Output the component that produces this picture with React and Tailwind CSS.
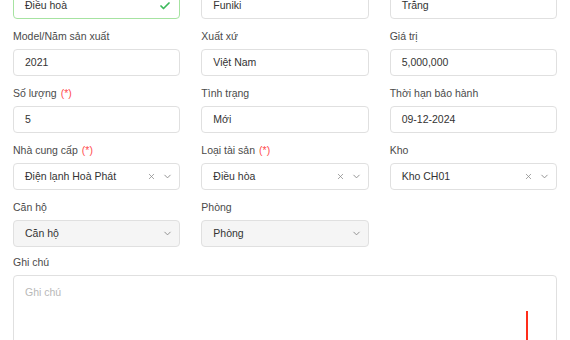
import { Check, ChevronDown, X } from 'lucide-react'

const font = { fontFamily: '"Liberation Sans", Arial, sans-serif' }

function Label({ text, required }) {
  return (
    <div className="h-[14px] text-[10.5px] leading-[14px] text-[#4a4a4a]">
      {text}
      {required && <span className="ml-1 text-[#ff4d4f]">(*)</span>}
    </div>
  )
}

function Input({ value, valid }) {
  return (
    <div
      className={`flex h-[27px] items-center justify-between rounded-[4px] border bg-white pl-[11px] pr-[8px] text-[10.5px] text-[#333] ${
        valid ? 'border-[#a6e3a1]' : 'border-[#e0e0e0]'
      }`}
    >
      <span>{value}</span>
      {valid && <Check className="h-[12px] w-[12px] text-[#3cb95b]" strokeWidth={3.5} />}
    </div>
  )
}

function Select({ value, clear, disabled }) {
  return (
    <div
      className={`flex h-[27px] items-center justify-between rounded-[4px] border border-[#e0e0e0] pl-[11px] pr-[6px] text-[10.5px] text-[#333] ${
        disabled ? 'bg-[#f5f5f5]' : 'bg-white'
      }`}
    >
      <span>{value}</span>
      <div className="flex items-center gap-[6px] text-[#8a8a8a]">
        {clear && <X className="h-[9px] w-[9px]" strokeWidth={2} />}
        <ChevronDown className="h-[11px] w-[11px]" strokeWidth={2} />
      </div>
    </div>
  )
}

function Field({ label, required, children }) {
  return (
    <div className="flex flex-col gap-[6px]">
      {label && <Label text={label} required={required} />}
      {children}
    </div>
  )
}

export default function App() {
  return (
    <div className="relative h-[340px] w-[570px] overflow-hidden bg-white" style={font}>
      <div className="-mt-[8px] pl-[13px] pr-[13px]">
        <div className="grid grid-cols-3 gap-x-[21px] gap-y-[10px]">
          <Input value="Điều hoà" valid />
          <Input value="Funiki" />
          <Input value="Trắng" />

          <Field label="Model/Năm sản xuất">
            <Input value="2021" />
          </Field>
          <Field label="Xuất xứ">
            <Input value="Việt Nam" />
          </Field>
          <Field label="Giá trị">
            <Input value="5,000,000" />
          </Field>

          <Field label="Số lượng" required>
            <Input value="5" />
          </Field>
          <Field label="Tình trạng">
            <Input value="Mới" />
          </Field>
          <Field label="Thời hạn bảo hành">
            <Input value="09-12-2024" />
          </Field>

          <Field label="Nhà cung cấp" required>
            <Select value="Điện lạnh Hoà Phát" clear />
          </Field>
          <Field label="Loại tài sản" required>
            <Select value="Điều hòa" clear />
          </Field>
          <Field label="Kho">
            <Select value="Kho CH01" clear />
          </Field>

          <Field label="Căn hộ">
            <Select value="Căn hộ" disabled />
          </Field>
          <Field label="Phòng">
            <Select value="Phòng" disabled />
          </Field>
          <div />
        </div>

        <div className="mt-[8px] flex flex-col gap-[6px]">
          <Label text="Ghi chú" />
          <div className="h-[80px] rounded-[4px] border border-[#e0e0e0] bg-white px-[11px] pt-[9px] text-[10.5px] text-[#b8b8b8]">
            Ghi chú
          </div>
        </div>
      </div>

      <div className="absolute left-[526px] top-[311px] h-[30px] w-[2px] bg-[#ff2d1a]" />
    </div>
  )
}
